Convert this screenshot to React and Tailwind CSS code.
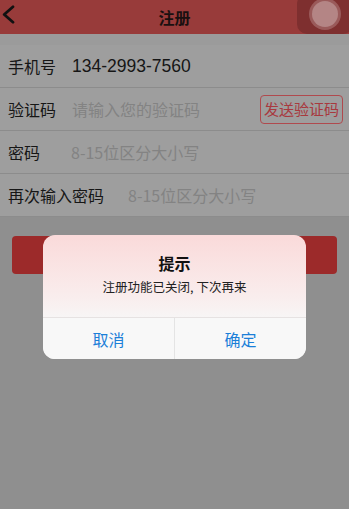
import React from 'react';

const rows = [
  { label: '手机号', value: '134-2993-7560', gap: 'mr-[16px]' },
  { label: '验证码', placeholder: '请输入您的验证码', action: '发送验证码', gap: 'mr-[16px]' },
  { label: '密码', placeholder: '8-15位区分大小写', gap: 'mr-[16px]' },
  { label: '再次输入密码', placeholder: '8-15位区分大小写', gap: 'mr-[24px]' },
];

const App = () => {
  return (
    <div
      className="relative h-[509px] w-[349px] overflow-hidden bg-[#8f8f8f]"
      style={{ fontFamily: '"Noto Sans CJK SC", "Noto Sans", sans-serif' }}
    >
      <header className="relative flex h-[34px] items-center justify-center bg-[#983b3a]">
        <svg className="absolute left-[1px] top-[5px]" width="14" height="19" viewBox="0 0 14 19">
          <path d="M12 1.8 L3.2 9.5 L12 17.2" fill="none" stroke="#111" strokeWidth="2.8" strokeLinecap="round" strokeLinejoin="round" />
        </svg>
        <h1 className="text-[16px] font-bold text-[#1a1010]">注册</h1>
        <div className="absolute right-[-4px] top-[-6px] flex h-[40px] w-[56px] items-center justify-center rounded-[10px] bg-[#7e2f2f]">
          <div className="flex h-[32px] w-[32px] items-center justify-center rounded-full bg-[#9a5a5a]">
            <div className="h-[26px] w-[26px] rounded-full bg-[#b48585]" />
          </div>
        </div>
      </header>

      <div className="h-[11px] bg-[#9b9b9b]" />

      <div className="bg-[#9e9e9e]">
        {rows.map((r) => (
          <div key={r.label} className="flex h-[43px] items-center border-b border-[#8c8c8c] pl-[8px] pr-[6px]">
            <span className={`${r.gap} min-w-[47px] text-[16px] text-[#161616]`}>{r.label}</span>
            {r.value && (
              <span className="text-[17.5px] text-[#161616]" style={{ fontFamily: '"Liberation Sans", sans-serif' }}>
                {r.value}
              </span>
            )}
            {r.placeholder && <span className="text-[16px] text-[#838383]">{r.placeholder}</span>}
            {r.action && (
              <span className="ml-auto flex h-[29px] items-center rounded-[4px] border border-[#b04a4e] px-[3px] text-[15px] text-[#a8393e]">
                {r.action}
              </span>
            )}
          </div>
        ))}
      </div>

      <div className="mx-[12px] mt-[19px] h-[38px] rounded-[4px] bg-[#9c2a2a]" />

      <div className="absolute left-[43px] top-[235px] w-[263px] overflow-hidden rounded-[12px] bg-gradient-to-b from-[#fadada] via-[#f9eded] to-[#f7f7f7] to-70%">
        <div className="flex h-[82px] flex-col items-center pt-[17px]">
          <p className="text-[16px] font-bold leading-[22px] text-[#111]">提示</p>
          <p className="mt-[4px] text-[12.5px] leading-[18px] text-[#222]">注册功能已关闭, 下次再来</p>
        </div>
        <div className="flex h-[42px] border-t border-[#e6e2e2] bg-[#f8f8f8]">
          <button className="flex-1 border-r border-[#e4e4e4] text-[16px] text-[#1b7fd8]">取消</button>
          <button className="flex-1 text-[16px] text-[#1b7fd8]">确定</button>
        </div>
      </div>
    </div>
  );
};

export default App;
